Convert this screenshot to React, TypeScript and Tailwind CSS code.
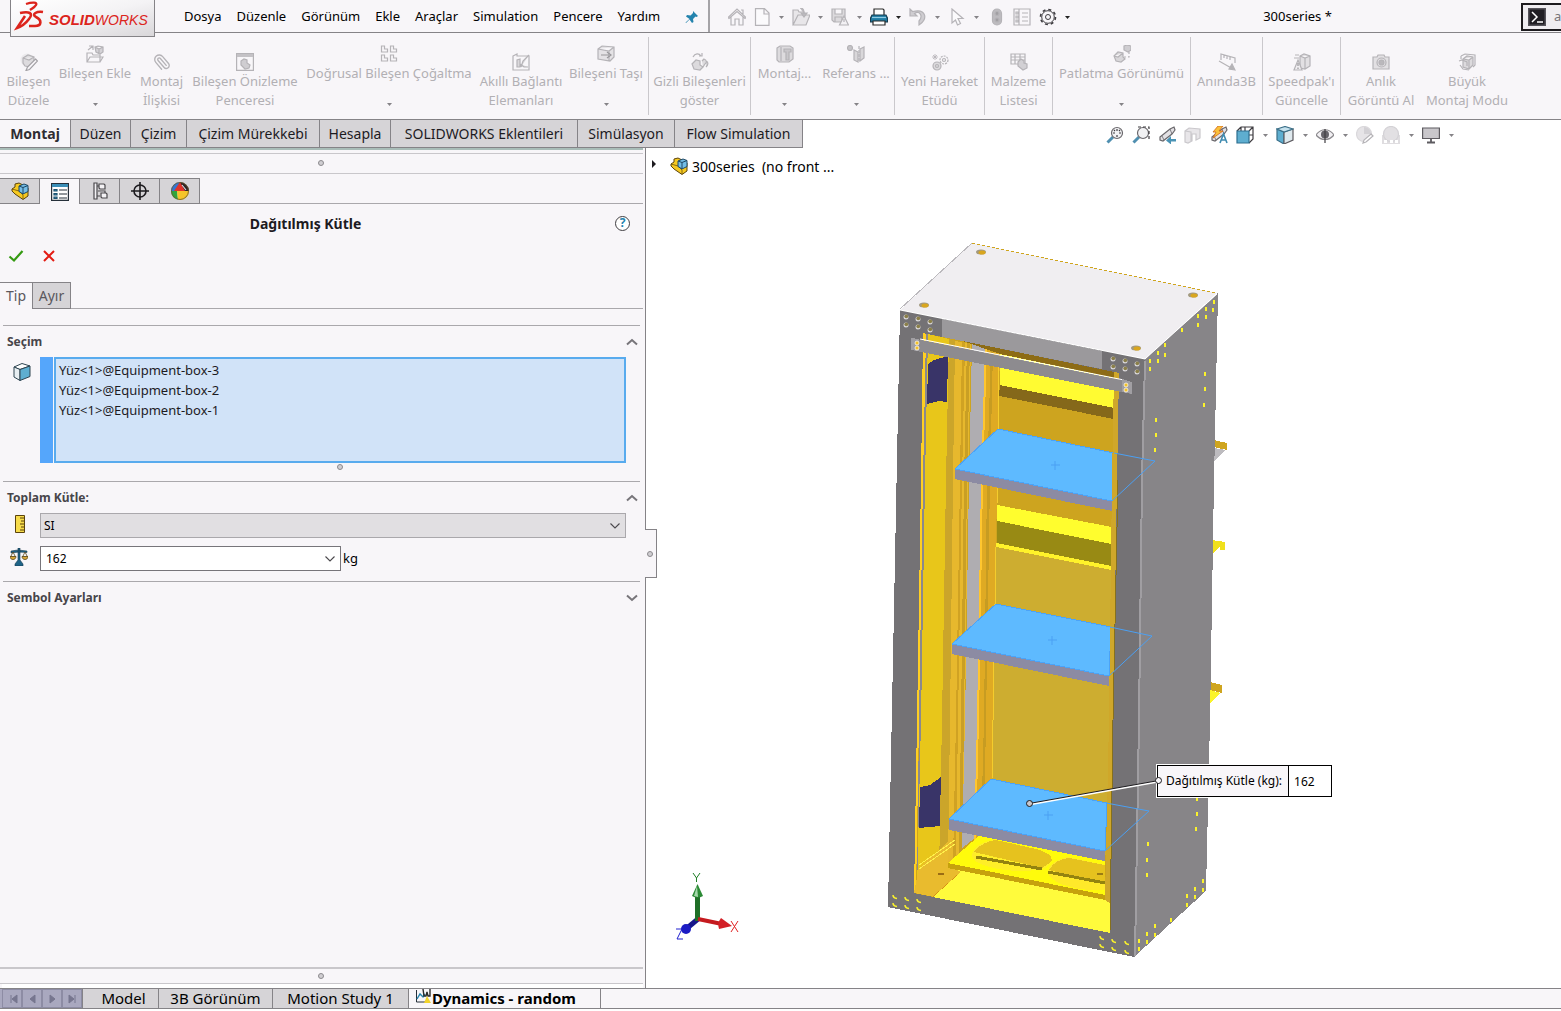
import React from 'react';
import { Paperclip } from 'lucide-react';

/* --- Small shared glyphs --- */
const Caret: React.FC<{ dark?: boolean }> = ({ dark }) => (
  <svg viewBox="0 0 5 3" className="w-[5px] h-[3px]">
    <path d="M0 0h5L2.5 3z" fill={dark ? '#222' : '#858387'} />
  </svg>
);

const Dot: React.FC = () => (
  <span className="block size-[6px] rounded-full border border-[#8b898d] bg-[#d0ced2]" />
);

const Chevron: React.FC<{ up?: boolean }> = ({ up }) => (
  <svg viewBox="0 0 12 8" className="w-3 h-2" fill="none" stroke="#77757a" strokeWidth="2">
    <path d={up ? 'M1 6.5 6 2l5 4.500' : 'M1 1.500 6 6l5-4.500'} />
  </svg>
);

const ThinChevron: React.FC = () => (
  <svg viewBox="0 0 10 6" className="w-[10px] h-[6px]" fill="none" stroke="#4a484c" strokeWidth="1.1">
    <path d="M.5.5 5 5 9.500.5" />
  </svg>
);

const Icon: React.FC<{ children: React.ReactNode; size?: string }> = ({ children, size = 'size-[18px]' }) => (
  <svg viewBox="0 0 18 18" className={`${size} shrink-0`} fill="none" stroke="#b5b3b7" strokeWidth="1.2">
    {children}
  </svg>
);

const PartIcon: React.FC = () => (
  <svg viewBox="0 0 18 18" className="size-[18px] shrink-0" stroke="#5b430c" strokeLinejoin="round">
    <path d="M1 7 4 5V2l4-1 4 2 5 3v8l-5 3.500L4 12 1 9z" fill="#f6c920" />
    <path d="M1 7l7 2 4 4v4" fill="none" strokeWidth=".7" />
    <path d="M8 4l5-2 4 1.500v6L12 12 8 9.500z" fill="#74bde6" stroke="#1d4764" />
    <path d="M8 4l4 1.500 5-2M12 5.500V12" fill="none" stroke="#1d4764" />
  </svg>
);

/* --- Ribbon --- */
const cube = 'M5 6l4-3 6 1v8l-4 4-6-2zM5 6l6 1 4-3M11 7v9';
const grayIcons: Record<string, React.ReactNode> = {
  edit: (
    <>
      <circle cx="7" cy="7" r="6.500" fill="#eceaed" stroke="none" />
      <path d="M3 5l5-3 6 2v7l-3 3-6-1-2-3zM3 5l6 2 5-3" fill="#dddbde" />
      <path d="M15.500 6l2 2-8 8.500L6 17.500 7.500 14z" fill="#f8f6f9" stroke="#a3a1a5" />
    </>
  ),
  insert: (
    <>
      <path d="M1 17V8h5l1 2h7v7zM1 17l3-5h13l-3 5M2 5l5-4M3 1h4v4" />
      <path d="M9 2l3-1 5 1v5l-3 2-4-2zM9 2l4 2 4-2M13 4v4" fill="#d4d2d6" />
    </>
  ),
  clip: <Paperclip x={0} y={0} width={18} height={18} stroke="#b5b3b7" strokeWidth={1.8} transform="rotate(95 9 9)" />,
  preview: (
    <>
      <path d="M.6.600h16.800v16.800H.600z" />
      <path d="M1 1h16v3H1z" fill="#c4c2c6" stroke="none" />
      <path d="M5 8l3-2 3 1v3l3 2-1 3-4 1-4-4z" fill="#cfcdd1" />
    </>
  ),
  pattern: <path d="M1.500 1h3v3h3v3h-6zM10.500 1h3v3h3v3h-6zM1.500 10h3v3h3v3h-6zM10.500 10h3v3h3v3h-6z" />,
  smart: (
    <>
      <path d="M1 3l4-2v2h12v14H1z" />
      <path d="M5 14V7l3-1v8zM9 14l2-6 6-6M8 11l4 3h4" fill="#dbd9dc" />
    </>
  ),
  move: (
    <>
      <path d="M1 4l4-3 12 1v10l-4 4-12-2zM1 4l11 2 5-4M12 6v10" fill="#e4e2e5" />
      <path d="M4 10h8M10 7l4 3-4 3" stroke="#98969a" />
    </>
  ),
  hidden: (
    <>
      <path d="M2 4c2-4 6-4 8-1M8 3h3V0" />
      <path d="M1 11l4-4 4 1v4l3 2-3 3-6-1zM11 8l2-2c3 1 3 4 1 5l-2 3M15 8c3 1 2 4 0 6" fill="#dcdadd" />
    </>
  ),
  assembly: (
    <>
      <path d="M1 3l3-2h10l3 2v11l-4 3H3l-2-2z" fill="#dddbde" />
      <path d="M5 2v14" />
      <path d="M8 7V4h7v3h-2v8h-3V7z" fill="#c9c7cb" />
    </>
  ),
  reference: (
    <>
      <circle cx="3" cy="3" r="2.500" fill="#c6c4c8" />
      <path d="M7 5l4 2v10l-4-2zM13 4l4-2v11l-4 3z" fill="#d9d7da" />
      <path d="M12 1v16" strokeDasharray="3 1" />
    </>
  ),
  motion: (
    <>
      <circle cx="6" cy="13" r="4" fill="#dcdadd" />
      <circle cx="6" cy="13" r="1.500" />
      <circle cx="13" cy="7" r="4" strokeDasharray="2 1" />
      <circle cx="13" cy="7" r="1.500" />
      <path d="M4 1v6M1 4h6M2 2l4 4M6 2L2 6" strokeWidth=".8" />
    </>
  ),
  bom: (
    <>
      <path d="M1 1h14v10H1zM1 4h14M1 7h14M5 1v10M10 1v10" />
      <path d="M8 9l3-3 3 2v2l3 1v4l-4 2-5-4z" fill="#d2d0d4" />
    </>
  ),
  explode: (
    <>
      <path d="M1 11l4-4 5 1v4l2 2-4 3-5-1zM1 11l4 1 5-4" fill="#d9d7da" />
      <path d="M11 1l3-1 4 1v4l-3 2-4-2z" fill="#cfcdd1" />
      <path d="M16 7v5h-5" strokeDasharray="2 2" />
    </>
  ),
  instant: (
    <>
      <path d="M3 7V1l14 4v5M6 2v3M9 3v3M12 4v3" />
      <path d="M1 8l14 8M17 17l-6-1 3-5z" fill="#b5b3b7" />
    </>
  ),
  speedpak: (
    <>
      <path d="M7 3l4-2 6 2v10l-5 3-5-1zM7 3l5 2 5-2M12 5v11M2 2h4M1 5h5" fill="#e2e0e3" />
      <path d="M5 7l4 10H1z" fill="#f1eff2" />
      <path d="M5 10v3M5 14.500v1.500" stroke="#98969a" />
    </>
  ),
  camera: (
    <>
      <path d="M1 4h4l1-2h6l1 2h4v12H1z" fill="#e2e0e3" />
      <circle cx="9.500" cy="9.500" r="4.500" />
      <circle cx="9.500" cy="9.500" r="2.500" fill="#bab8bc" />
    </>
  ),
  large: (
    <>
      <path d={cube} fill="#dcdadd" />
      <path d="M3 3l4-2 10 1v10l-2 2M3 3v3M1 8l3-1 5 2v4M2 12l3 4 6 1" />
    </>
  ),
};

type RibbonItem = { icon: string; lines: string[]; width: string; menu?: boolean; sep?: boolean };

const ribbon: RibbonItem[] = [
  { icon: 'edit', lines: ['Bileşen', 'Düzele'], width: 'w-[57px]' },
  { icon: 'insert', lines: ['Bileşen Ekle'], width: 'w-[76px]', menu: true },
  { icon: 'clip', lines: ['Montaj', 'İlişkisi'], width: 'w-[57px]' },
  { icon: 'preview', lines: ['Bileşen Önizleme', 'Penceresi'], width: 'w-[110px]' },
  { icon: 'pattern', lines: ['Doğrusal Bileşen Çoğaltma'], width: 'w-[178px]', menu: true },
  { icon: 'smart', lines: ['Akıllı Bağlantı', 'Elemanları'], width: 'w-[86px]' },
  { icon: 'move', lines: ['Bileşeni Taşı'], width: 'w-[85px]', menu: true, sep: true },
  { icon: 'hidden', lines: ['Gizli Bileşenleri', 'göster'], width: 'w-[102px]', sep: true },
  { icon: 'assembly', lines: ['Montaj...'], width: 'w-[67px]', menu: true },
  { icon: 'reference', lines: ['Referans ...'], width: 'w-[77px]', menu: true, sep: true },
  { icon: 'motion', lines: ['Yeni Hareket', 'Etüdü'], width: 'w-[90px]', sep: true },
  { icon: 'bom', lines: ['Malzeme', 'Listesi'], width: 'w-[68px]', sep: true },
  { icon: 'explode', lines: ['Patlatma Görünümü'], width: 'w-[138px]', menu: true, sep: true },
  { icon: 'instant', lines: ['Anında3B'], width: 'w-[72px]', sep: true },
  { icon: 'speedpak', lines: ["Speedpak'ı", 'Güncelle'], width: 'w-[78px]', sep: true },
  { icon: 'camera', lines: ['Anlık', 'Görüntü Al'], width: 'w-[80px]' },
  { icon: 'large', lines: ['Büyük', 'Montaj Modu'], width: 'w-[92px]' },
];

const Ribbon: React.FC = () => (
  <div className="flex h-[87px] border-b border-[#858387] bg-[#f8f6f9]">
    {ribbon.map((item) => (
      <div key={item.icon} className={`${item.width} flex shrink-0 justify-center pt-1 pb-1`}>
        <button
          className={`flex flex-1 flex-col items-center whitespace-nowrap text-[13px] leading-[19px] text-[#b2b0b4] ${item.menu ? 'pt-2' : 'pt-4'}`}
        >
          <Icon>{grayIcons[item.icon]}</Icon>
          <span className="mt-px flex flex-col items-center">
            {item.lines.map((line) => <span key={line}>{line}</span>)}
          </span>
          {item.menu && <span className="mt-5"><Caret /></span>}
        </button>
        {item.sep && <span className="w-px bg-[#cac8cc]" />}
      </div>
    ))}
  </div>
);

/* --- Title bar --- */
const menus = ['Dosya', 'Düzenle', 'Görünüm', 'Ekle', 'Araçlar', 'Simulation', 'Pencere', 'Yardım'];

const quick: { name: string; icon: React.ReactNode; width: string; menu?: boolean; dark?: boolean }[] = [
  { name: 'Ana sayfa', width: 'w-[28px]', icon: <path d="M0 9.500 9 1l9 8.500-1 1-8-7-8 7zM3 9v8h4v-6h4v6h4V9M13 2h2v4" /> },
  { name: 'Yeni', width: 'w-[21px]', menu: true, icon: <path d="M2.500.6h9L16 5v12.400H2.500zM11 1v5h5" fill="#fbfafc" /> },
  {
    name: 'Aç', width: 'w-[21px]', menu: true,
    icon: <><path d="M1 17V2h5l1 2h5v3M1 17l5-10h12l-4 10z" fill="#e8e6e9" /><path d="M8 0c4 0 4 3 4 6M9 5l3 4 3-4z" fill="#bcbabe" /></>,
  },
  {
    name: 'Kaydet', width: 'w-[21px]', menu: true,
    icon: <><path d="M1 1h13v13H3l-2-2zM4 1v5h7V1M4 14V9h7v5" fill="#dcdadd" /><path d="M13 8l4.500 9h-9zM13 11v3" fill="#f3f1f4" /></>,
  },
  {
    name: 'Yazdır', width: 'w-[21px]', menu: true, dark: true,
    icon: (
      <>
        <path d="M4 8V1h9l1 1v6" fill="#fff" stroke="#2b2b2b" />
        <path d="M2 7h14l1.500 3v4H.5v-4z" fill="#1f7ca3" stroke="#173b4e" />
        <path d="M2 9.500h14" stroke="#8ecbe3" />
        <path d="M3 13h12v4H3z" fill="#fff" stroke="#2b2b2b" />
      </>
    ),
  },
  { name: 'Geri al', width: 'w-[21px]', menu: true, icon: <path d="M1 1v7h7L5.500 5.500c5-3 9 2 4.500 7.500v4c9-5 8-17-6.500-13.500z" fill="#cfcdd1" /> },
  { name: 'Seç', width: 'w-[21px]', menu: true, icon: <path d="M4 1v14l3.500-3 2 5 3-1.500-2.500-5h5z" fill="#fbfafc" /> },
  {
    name: 'Yeniden oluştur', width: 'w-[24px]',
    icon: <><rect x="4.500" y="1" width="9" height="16" rx="4.500" fill="#bdbbbf" /><circle cx="9" cy="5.500" r="2" fill="#a19fa3" /><circle cx="9" cy="12" r="2" fill="#a19fa3" /></>,
  },
  { name: 'Özellikler', width: 'w-[26px]', icon: <path d="M1 1h16v16H1zM6 1v16M3 4h2v2H3zM3 8h2v2H3zM3 12h2v2H3zM9 5h6M9 9h6M9 13h6" /> },
  {
    name: 'Seçenekler', width: 'w-[26px]',
    icon: (
      <>
        <circle cx="9" cy="9" r="7.500" stroke="#3f3d41" strokeWidth="1.600" strokeDasharray="3 2.900" />
        <circle cx="9" cy="9" r="6.300" stroke="#3f3d41" strokeWidth="1" fill="#f8f6f9" />
        <circle cx="9" cy="9" r="2.500" stroke="#3f3d41" strokeWidth="1" />
      </>
    ),
  },
];

const TitleBar: React.FC = () => (
  <header className="relative flex h-[33px] items-center border-b border-[#858387] bg-[#f8f6f9] pt-[2px] text-[13px]">
    <a
      href="#home"
      aria-label="SOLIDWORKS"
      className="absolute left-[10px] top-0 z-10 h-[37px] w-[145px] border border-t-0 border-[#858387] bg-linear-to-br from-white via-[#f4f3f5] to-[#d9d7da]"
    >
      <svg viewBox="0 0 143 36" className="h-full w-full">
        <g fill="none" stroke="#dc241c" strokeWidth="2.300">
          <path d="M15 4c6-2 12-2 10 1-1 2-3 3-6 5" />
          <path d="M9 13c9-2 14 0 9 6-3 4-6 7-12 9l8-12" strokeWidth="2.600" />
          <path d="M32 12c-6-1-12 2-7 5 6 3 6 9-1 9h-6" strokeWidth="2.600" />
        </g>
        <text x="38" y="25" fill="#dc241c" fontFamily="Liberation Sans" fontStyle="italic" fontSize="15">
          <tspan fontWeight="bold">SOLID</tspan>
          <tspan fontSize="14">WORKS</tspan>
        </text>
      </svg>
    </a>
    <nav className="flex items-center gap-[15px] pl-[184px]">
      {menus.map((m) => <button key={m}>{m}</button>)}
    </nav>
    <button aria-label="Sabitle" className="ml-[25px]">
      <svg viewBox="0 0 14 14" className="size-[14px]" fill="#2483ad">
        <path d="M8 1l5 5-1.500 1-1-.5L8 9l.5 3L7 13 4.500 9.500 1 13l-.5-.5L4.500 9 1 6.500l1-1.500 3.500.5L8 3z" />
      </svg>
    </button>
    <div className="-mt-[2px] ml-[9px] flex h-[32px] items-center border-l-2 border-[#a5a3a7] pt-[2px] pl-[13px]">
      {quick.map((q) => (
        <React.Fragment key={q.name}>
          <button aria-label={q.name} className={`${q.width} flex justify-center`}>
            <Icon>{q.icon}</Icon>
          </button>
          {q.menu && (
            <button aria-label={`${q.name} menüsü`} className="flex w-[18px] justify-center">
              <Caret dark={q.dark} />
            </button>
          )}
        </React.Fragment>
      ))}
      <button aria-label="Seçenekler menüsü" className="flex w-3 justify-center"><Caret dark /></button>
    </div>
    <span className="mr-auto ml-[190px] whitespace-nowrap">300series *</span>
    <div className="flex h-[28px] w-[40px] items-center gap-2 overflow-hidden border-2 border-r-0 border-[#1d1b1f] bg-[#efedf1] pl-[5px] text-[#77757a]">
      <svg viewBox="0 0 18 18" className="size-[18px] shrink-0">
        <path d="M0 0h18v18H0z" fill="#55535a" />
        <path d="M1.500 1.500h15v15h-15z" fill="#201e24" />
        <path d="M4 4l5 5-5 5M9 14h6" fill="none" stroke="#fff" strokeWidth="1.500" />
      </svg>
      <span>a</span>
    </div>
  </header>
);

/* --- Command tabs and view toolbar --- */
const commandTabs = [
  ['Düzen', 'w-[60px]'],
  ['Çizim', 'w-[56px]'],
  ['Çizim Mürekkebi', 'w-[133px]'],
  ['Hesapla', 'w-[71px]'],
  ['SOLIDWORKS Eklentileri', 'w-[187px]'],
  ['Simülasyon', 'w-[97px]'],
  ['Flow Simulation', 'w-[128px]'],
];

const lens = (
  <>
    <path d="M1.500 16.500 7 11" stroke="#4f8fb0" strokeWidth="3" />
    <circle cx="11" cy="7" r="5.500" fill="#f2f2f4" stroke="#6a686c" />
  </>
);
const scope = (
  <>
    <path d="M2 11 12 3l4-2 1 3-3 4-9 7-3-1z" fill="#e3e1e4" stroke="#6a686c" />
    <path d="M12 3l2 5M4 10l2 4" stroke="#6a686c" strokeWidth=".8" />
  </>
);
const views: { name: string; icon: React.ReactNode; menu?: boolean }[] = [
  { name: 'Tümünü sığdır', icon: <>{lens}<path d="M11 3v2M11 9v2M7 7h2M13 7h2M9 5l-1-1M13 5l1-1" stroke="#3f3d41" /></> },
  { name: 'Alana yakınlaştır', icon: <>{lens}<path d="M6 1h11v12" stroke="#3f3d41" strokeDasharray="3 2" /></> },
  { name: 'Önceki görünüm', icon: <>{scope}<path d="M18 13h-5v-3l-5 4.500 5 4v-3h5z" fill="#4a93b5" stroke="none" /></> },
  { name: 'Kesit', icon: <path d="M1 5l4-3 11 1v9l-4 2V8H8v7l-4 2-3-1zM1 5l6 1v9" fill="#e8e6e9" stroke="#cac8cc" /> },
  {
    name: 'Dinamik not',
    icon: (
      <>
        {scope}
        <path d="M8 0h5L9 5h4L3 12l3-6H3z" fill="#f9c13b" stroke="#d0641c" strokeWidth=".8" />
        <path d="M10 17l3.500-9 3.500 9M11 14h5" stroke="#3f8bb0" strokeWidth="1.600" />
      </>
    ),
  },
  {
    name: 'Görünüm yönü', menu: true,
    icon: <><path d="M5 1h12v12l-4 4M5 1 1 5M17 1l-4 4M9 1v10M5 1v4M17 9h-4" stroke="#3f3d41" /><path d="M1 5h12v12H1z" fill="#5eaed0" stroke="#2d6f90" /></>,
  },
  {
    name: 'Görüntü stili', menu: true,
    icon: <><path d="M1 3l7 3v12l-7-4z" fill="#5eaed0" stroke="#3b6f88" /><path d="M8 6l9-3v11l-9 4z" fill="#dfe9ee" stroke="#5d5b60" /><path d="M1 3l8-2.500L17 3 8 6z" fill="#c6e2ee" stroke="#3b6f88" /></>,
  },
  {
    name: 'Gizle/göster', menu: true,
    icon: <><path d="M0 9c5-7 13-7 18 0-5 6-13 6-18 0z" fill="#f2f0f3" stroke="#8b898d" /><circle cx="9" cy="8.500" r="4" fill="#66646a" stroke="none" /><path d="M9 3v14" stroke="#3f3d41" /></>,
  },
  { name: 'Görünüş düzenle', icon: <><circle cx="8" cy="8" r="7.500" fill="#e6e4e7" stroke="#dad8db" /><path d="M8 1a7 7 0 0 1 7 7H8z" fill="#d3d1d5" stroke="none" /><path d="M15 8l2 2-7 6-3 1 1-3z" fill="#fff" /></> },
  { name: 'Sahne uygula', menu: true, icon: <><path d="M0 9h18v9H0z" fill="#dfdde0" stroke="none" /><circle cx="9" cy="8" r="7.500" fill="#e2e0e3" stroke="#d3d1d5" /><path d="M2 14h3v3H2zM8 14h3v3H8zM13 14h3v3h-3z" fill="#fff" stroke="none" /></> },
  { name: 'Görünüm ayarları', menu: true, icon: <><path d="M.600 2h16.800v10.500H.600z" fill="#c9c7cb" stroke="#5d5b60" /><path d="M9 13v3M5 16.500h8" stroke="#5d5b60" strokeWidth="1.800" /></> },
];

const TabRow: React.FC = () => (
  <div className="flex h-[28px] bg-white text-sm">
    <div className="flex items-stretch whitespace-nowrap border-b border-[#858387] text-[#1d1b1f]">
      <button className="w-[70px] bg-[#f8f6f9] font-bold text-[#2f2d31]">Montaj</button>
      {commandTabs.map(([label, width]) => (
        <button key={label} className={`${width} border-l border-[#858387] bg-[#d6d4d7]`}>{label}</button>
      ))}
      <span className="w-px bg-[#858387]" />
    </div>
    <div className="mr-[103px] ml-auto flex items-center pt-[2px]">
      {views.map((v) => (
        <React.Fragment key={v.name}>
          <button aria-label={v.name} className="flex w-[26px] justify-center"><Icon>{v.icon}</Icon></button>
          {v.menu && (
            <button aria-label={`${v.name} menüsü`} className="flex w-[14px] justify-center"><Caret /></button>
          )}
        </React.Fragment>
      ))}
    </div>
  </div>
);

/* --- Property panel --- */
const panelTabs: { name: string; active?: boolean; icon: React.ReactNode }[] = [
  { name: 'FeatureManager', icon: <PartIcon /> },
  {
    name: 'PropertyManager', active: true,
    icon: (
      <Icon>
        <path d="M.600.600h16.800v16.800H.600z" fill="#fff" stroke="#26303a" />
        <path d="M1 1h16v3H1z" fill="#3b8fb8" stroke="none" />
        <path d="M3 6.500h3v1.500H3zM3 10.500h3v1.500H3zM3 14h3v1.500H3z" fill="#3b8fb8" stroke="#1d5270" />
        <path d="M8 7h8M8 11h8M8 15h8" stroke="#26303a" />
      </Icon>
    ),
  },
  {
    name: 'ConfigurationManager',
    icon: (
      <Icon>
        <path d="M3 1h3v16H3zM6 4h3M6 14h3" fill="#f3f1f4" stroke="#4a484c" />
        <path d="M8 2h5l1 1v4H9L8 6zM10 11h5l1 1v4h-5l-1-1zM7 9h7v2" fill="#f3f1f4" stroke="#4a484c" />
      </Icon>
    ),
  },
  {
    name: 'DimXpertManager',
    icon: <Icon><circle cx="9" cy="9" r="6" stroke="#1d1b1f" strokeWidth="1.600" /><path d="M9 0v18M0 9h18" stroke="#1d1b1f" strokeWidth="1.600" /></Icon>,
  },
  {
    name: 'DisplayManager',
    icon: (
      <Icon>
        <path d="M9 9V0a9 9 0 0 0-9 9z" fill="#3576d2" stroke="none" />
        <path d="M9 9V0a9 9 0 0 1 9 9z" fill="#2b2226" stroke="none" />
        <path d="M3 9 9 0l5 9z" fill="#e0332b" stroke="none" />
        <path d="M0 9h6l1 8.500A9 9 0 0 1 0 9z" fill="#2fa53c" stroke="none" />
        <path d="M6 9h12a9 9 0 0 1-11 8.800z" fill="#f5c52a" stroke="none" />
        <path d="M11 3l4 5" stroke="#ddd" />
        <circle cx="9" cy="9" r="8.500" stroke="#6b5a2a" strokeWidth=".8" />
      </Icon>
    ),
  },
];

const selection = ['Yüz<1>@Equipment-box-3', 'Yüz<1>@Equipment-box-2', 'Yüz<1>@Equipment-box-1'];

const GroupHead: React.FC<{ title: string; open?: boolean }> = ({ title, open }) => (
  <button className="flex h-[31px] w-full items-center justify-between pt-px pr-[2px] pl-1 text-left text-[12px] font-bold text-[#47454a]">
    {title}
    <Chevron up={open} />
  </button>
);

const PropertyPanel: React.FC = () => (
  <aside className="relative flex w-[646px] shrink-0 flex-col border-r border-[#858387] bg-[#f8f6f9]">
    <div className="mr-[2px] flex h-[26px] flex-col border-b border-[#c9c7cb]">
      <div className="h-[6px] border-t-2 border-b border-t-[#a9bdb8] border-b-[#c9c7cb]" />
      <div className="flex flex-1 items-center justify-center pr-[2px] pb-px"><Dot /></div>
    </div>

    <div className="mt-1 mr-[2px] flex h-[26px]">
      {panelTabs.map((t) => (
        <button
          key={t.name}
          aria-label={t.name}
          className={`flex w-10 items-center justify-center border-t border-r border-[#858387] ${t.active ? '' : 'border-b bg-[#d6d4d7]'}`}
        >
          {t.icon}
        </button>
      ))}
      <span className="flex-1 border-b border-[#aaa8ac]" />
    </div>

    <div className="flex h-[38px] items-center pr-[15px]">
      <h2 className="flex-1 pt-px pr-[4px] text-center text-sm font-bold text-[#1d1b1f]">Dağıtılmış Kütle</h2>
      <button aria-label="Yardım" className="flex size-[15px] items-center justify-center rounded-full border border-[#3f3d41] bg-white text-[12px] leading-none font-bold text-[#2483ad]">
        ?
      </button>
    </div>

    <div className="flex h-[40px] items-center gap-[19px] pb-[12px] pl-2">
      <button aria-label="Tamam">
        <svg viewBox="0 0 16 14" className="h-[14px] w-4"><path d="M1.500 7.500 6 11.500 14.500 2" fill="none" stroke="#359a12" strokeWidth="2.200" /></svg>
      </button>
      <button aria-label="İptal">
        <svg viewBox="0 0 12 12" className="size-3"><path d="M1 1l10 10M11 1 1 11" fill="none" stroke="#e31b13" strokeWidth="2" /></svg>
      </button>
    </div>

    <div className="mr-[2px] flex h-[27px] text-sm text-[#5a585d]">
      <button className="w-8 border-t border-[#858387]">Tip</button>
      <button className="w-[39px] border border-[#858387] bg-[#d6d4d7]">Ayır</button>
      <span className="flex-1 border-b border-[#aaa8ac]" />
    </div>

    <section className="mt-4 mr-[5px] ml-[3px] border-t border-[#aaa8ac]">
      <GroupHead title="Seçim" open />
      <div className="flex">
        <div className="flex w-[37px] justify-center pt-[5px]">
          <svg viewBox="0 0 18 20" className="h-5 w-[18px]" stroke="#2e4451" strokeLinejoin="round">
            <path d="M1 5l8-3.500L17 4 7 7.500z" fill="#fff" />
            <path d="M1 5l6 2.500v11L1 15z" fill="#e8eef2" />
            <path d="M7 7.500 17 4v10.500l-10 4z" fill="#5eaed0" />
          </svg>
        </div>
        <div className="mr-px h-[106px] w-[13px] bg-[#55a6fb]" />
        <ul className="mr-[14px] h-[106px] flex-1 border-2 border-[#58abee] bg-[#d1e3f8] pt-px pl-[3px] text-[13px] leading-5 text-[#1d1b1f]">
          {selection.map((s) => <li key={s}>{s}</li>)}
        </ul>
      </div>
      <div className="flex h-[18px] justify-center pt-px pl-[37px]"><Dot /></div>
    </section>

    <section className="mr-[5px] ml-[3px] border-t border-[#aaa8ac]">
      <GroupHead title="Toplam Kütle:" open />
      <div className="flex h-[25px] items-center">
        <label htmlFor="unit" aria-label="Birim" className="flex w-[37px] justify-center pr-1">
          <svg viewBox="0 0 10 18" className="mb-1 h-[18px] w-[10px]">
            <path d="M.5.5h9v17h-9z" fill="#f7dc4b" stroke="#5b430c" />
            <path d="M5 3h4M6 6h3M5 9h4M6 12h3M5 15h4" stroke="#5b430c" />
          </svg>
        </label>
        <div className="relative mr-[14px] flex flex-1 items-center">
          <select id="unit" className="h-[25px] w-full appearance-none border border-[#aaa8ac] bg-[#e1dfe2] px-[3px] text-[12px]">
            <option>SI</option>
          </select>
          <span className="pointer-events-none absolute right-[6px]"><ThinChevron /></span>
        </div>
      </div>
      <div className="mt-2 flex h-[25px] items-center">
        <label htmlFor="mass" aria-label="Kütle" className="flex w-[37px] justify-center pr-[6px]">
          <svg viewBox="0 0 18 18" className="mb-1 size-[18px]">
            <path d="M8 0h2v12l3 4v2H5v-2l3-4zM1 3l7-1 9 1v1.500L9 4 1 5z" fill="#1f6387" stroke="#173b4e" strokeWidth=".6" />
            <path d="M3 4 .5 9h5zM15 4l-2.500 5h5z" fill="none" stroke="#59471c" strokeWidth=".8" />
            <path d="M0 8.500h6c0 4-6 4-6 0zM12 8.500h6c0 4-6 4-6 0z" fill="#d9a637" stroke="#59471c" strokeWidth=".8" />
          </svg>
        </label>
        <div className="flex h-[25px] w-[301px] items-center border border-[#77757a] bg-white">
          <input id="mass" defaultValue="162" className="min-w-0 flex-1 pl-[5px] text-[12px] outline-none" />
          <button aria-label="Değer listesi" className="pr-[5px]"><ThinChevron /></button>
        </div>
        <span className="pl-[2px] text-[13px]">kg</span>
      </div>
    </section>

    <section className="mt-[10px] mr-[5px] ml-[3px] border-t border-[#aaa8ac]">
      <GroupHead title="Sembol Ayarları" />
    </section>

    <div className="mt-auto mr-[2px] flex h-[17px] items-center justify-center border-t-2 border-b border-[#c9c7cb] pr-[2px]"><Dot /></div>
    <div className="mx-[2px] h-[4px] shrink-0 bg-white" />

    <button
      aria-label="Paneli daralt"
      className="absolute top-[381px] -right-[12px] z-10 flex h-[49px] w-[12px] items-center justify-center border border-l-0 border-[#858387] bg-[#f8f6f9] pr-px"
    >
      <Dot />
    </button>
  </aside>
);

/* --- Model view --- */
const poly = (points: string, fill: string) => <polygon points={points} fill={fill} />;

const shelves = [
  { top: '998,429 1114,453 1112,501 955,469', side: '955,469 1112,501 1112,511 955,479', tip: 'M1114 453 1155 461 1112 501', cx: 1055, cy: 465 },
  { top: '996,604 1111,627 1109,676 952,644', side: '952,644 1109,676 1109,686 952,654', tip: 'M1110 627 1152 636 1109 676', cx: 1052, cy: 640 },
  { top: '991,779 1107,803 1105,851 949,819', side: '949,819 1105,851 1105,861 949,830', tip: 'M1106 803 1149 811 1105 851', cx: 1048, cy: 815 },
];

const frontHoles = [
  [906, 317], [906, 325], [918, 319], [918, 327], [930, 322], [930, 330],
  [1113, 359], [1113, 367], [1125, 361], [1125, 369], [1137, 364], [1137, 372],
];

const footHoles = [
  [895, 897], [895, 905], [907, 899], [907, 907], [919, 901], [919, 909],
  [1102, 938], [1102, 946], [1114, 941], [1114, 949], [1127, 943], [1127, 952],
];

const sideHoles = [
  [1214, 302], [1213, 310], [1206, 309], [1206, 317], [1198, 316], [1198, 325], [1182, 330],
  [1165, 345], [1165, 355], [1158, 353], [1158, 361], [1150, 361], [1150, 369],
  [1205, 374], [1205, 389], [1204, 405], [1156, 420], [1156, 435], [1155, 450],
  [1197, 799], [1197, 814], [1196, 829], [1148, 844], [1147, 860], [1147, 875],
  [1203, 881], [1203, 890], [1195, 889], [1195, 897], [1187, 896], [1187, 905], [1171, 920],
  [1155, 926], [1155, 935], [1147, 934], [1147, 942], [1139, 941], [1139, 949],
];

const Cabinet: React.FC = () => (
  <svg viewBox="880 235 360 730" className="absolute top-[87px] left-[234px] h-[730px] w-[360px]" shapeRendering="crispEdges">
    {/* rear brackets */}
    {poly('1214,440 1227,443 1227,450 1214,447', '#cfa51f')}
    {poly('1214,448 1226,450 1214,461', '#bdbbbf')}
    {poly('1212,540 1225,542 1225,550 1220,550 1220,547 1212,554', '#f0e01c')}
    {poly('1210,682 1222,685 1222,693 1210,690', '#cfa51f')}
    {poly('1210,690 1221,693 1210,703', '#fbf42a')}

    {/* shell */}
    {poly('972,243 1217,293 1145,359 900,310', '#f0eef1')}
    {poly('1145,359 1218,293 1214,480 1210,720 1206,891 1134,957', '#878588')}
    {poly('900,310 1145,359 1142,480 1139,720 1134,957 888,907', '#747275')}
    {poly('942,319 1102,351 1102,369 942,337', '#9b999c')}
    <path d="M900 310 1145 359 1217 294" fill="none" stroke="#fff" strokeWidth="1" shapeRendering="geometricPrecision" />
    <path d="M900 309 972 243" stroke="#bbb9bd" />
    <path d="M972 243 1217 293" stroke="#cfa51f" strokeDasharray="3 2" />
    <path d="M1145 361 1142 480 1139 720 1135 956" fill="none" stroke="#a09ea2" strokeWidth="2" />

    {/* opening */}
    {poly('923,333 1119,373 1117,480 1113,720 1110,933 914,893 917,720 921,480', '#cda41f')}
    {poly('923,333 926,334 923,480 919,720 916,893 914,893 917,720 921,480', '#ffcf22')}
    {poly('926,334 928,334 925,480 921,720 919,890 917,890 919,720 923,480', '#8b898d')}
    {poly('928,334 949,339 946,480 942,720 939,880 917,892 921,720 925,480', '#e8c61a')}
    {poly('928,364 934,360 948,356 947,402 939,401 927,404', '#393468')}
    {poly('920,787 930,785 937,780 941,776 940,826 919,828', '#393468')}
    {poly('949,339 955,341 953,480 950,720 948,866 939,872 942,720 946,480', '#cba52a')}
    {poly('955,341 971,344 968,480 965,720 962,856 948,866 950,720 953,480', '#e7b82d')}
    {poly('962,342 965,343 962,480 958,720 956,860 953,862 956,720 960,480', '#d0a223')}
    {poly('967,343 970,344 967,480 964,720 962,854 959,856 961,720 964,480', '#c99f25')}
    {poly('972,344 985,347 981,480 977,720 975,838 962,848 965,720 969,480', '#afadb1')}
    {poly('985,347 1000,350 997,480 994,720 991,840 974,846 977,720 981,480', '#dfaa23')}
    {poly('985,347 987,347 983,480 979,720 976,838 974,840 977,720 981,480', '#ffc62f')}
    {poly('991,349 993,349 990,480 986,720 984,830 981,832 984,720 987,480', '#c79c22')}

    {/* back panel */}
    {poly('1000,545 1112,570 1110,720 1105,870 990,850 993,720 996,545', '#cdad30')}
    {poly('1000,350 1114,376 1114,408 1000,385', '#fffb32')}
    {poly('963,341 1119,373 1114,378 1000,354', '#8d6c16')}
    {poly('1000,385 1114,408 1114,419 999,396', '#85681a')}
    {poly('997,505 1112,527 1112,544 997,521', '#fffd2e')}
    {poly('997,521 1112,544 1111,566 997,543', '#988a14')}
    {poly('996,543 1111,566 1111,570 996,547', '#fff22a')}
    <path d="M999 366 997 505M996 547 992 779" stroke="#f5cc2c" />

    {/* floor and tray */}
    {poly('919,868 948,842 948,866 962,872 935,897 914,893', '#e9bb2e')}
    <path d="M919 865 955 840M919 869 955 844" stroke="#fff04a" />
    <path d="M933 897 960 873" stroke="#d98e16" />
    {poly('948,866 1105,898 1110,900 1110,933 933,897 961,872', '#fffb3c')}
    {poly('948,863 980,835 1105,860 1105,898', '#fffb0c')}
    <path d="M972 856c0-10 12-15 24-16l40 9c16 4 20 16 6 20-30 6-70-3-70-13z" fill="#ffee28" />
    <path d="M974 852c6-8 14-11 22-12l40 9c12 3 18 8 15 13l-9 6z" fill="#e6c21e" />
    <path d="M1048 872c0-8 10-13 20-15l37 8v25c-30 2-57-8-57-18z" fill="#ffe92a" />
    <path d="M1049 870c4-8 12-11 20-12l36 7v19z" fill="#e6c21e" />
    <path d="M976 857 1042 869M1048 872 1105 883" stroke="#94830f" strokeWidth="3" />
    {poly('948,863 1105,895 1105,900 948,868', '#c6a20d')}
    <ellipse cx="941" cy="874" rx="3" ry="1.500" fill="#9b6c14" />
    <ellipse cx="1100" cy="874" rx="3" ry="1.500" fill="#9b7c14" />

    {/* shelves */}
    {shelves.map((s) => (
      <g key={s.cy}>
        {poly(s.side, '#8c8ba3')}
        <polygon points={s.top} fill="#5ebaff" stroke="#4ba3f7" strokeWidth="1" />
      </g>
    ))}
    {poly('1114,372 1119,373 1117,480 1113,720 1110,903 1105,900 1109,720 1112,480', '#cfa72a')}
    <path d="M1118 480 1113 720 1110 930" fill="none" stroke="#86701c" />
    {shelves.map((s) => (
      <path
        key={s.cy}
        d={`${s.tip}M${s.cx - 4} ${s.cy}h9M${s.cx} ${s.cy - 4}v9`}
        fill="none"
        stroke="#4ba0f3"
        shapeRendering="geometricPrecision"
      />
    ))}

    {/* crossbar */}
    {poly('911,338 1132,382 1132,394 911,350', '#8d8b8f')}
    <path d="M920 339 1124 380" stroke="#fff" shapeRendering="geometricPrecision" />
    {poly('911,338 919,339 919,351 911,350', '#a19fa3')}
    {poly('1122,379 1132,382 1132,394 1122,392', '#a19fa3')}

    <g shapeRendering="geometricPrecision">
      {[[917, 343], [917, 348], [1126, 385], [1126, 390]].map(([x, y]) => (
        <circle key={`${x}-${y}`} cx={x} cy={y} r="2" fill="#f2c12a" stroke="#fff" strokeWidth=".7" />
      ))}
      {frontHoles.map(([x, y]) => (
        <g key={`${x}-${y}`}>
          <circle cx={x} cy={y} r="2.500" fill="#d9d7da" />
          <circle cx={x + 0.3} cy={y - 0.7} r="1.900" fill="#8a7f4a" />
        </g>
      ))}
      {footHoles.map(([x, y]) => (
        <path key={`${x}-${y}`} d={`M${x - 2} ${y - 2}q0 3 4 3.500`} fill="none" stroke="#fbf32a" strokeWidth="1.500" />
      ))}
      {[[981, 252], [924, 305], [1193, 295], [1136, 348]].map(([x, y]) => (
        <g key={x}>
          <ellipse cx={x} cy={y} rx="5" ry="2.500" fill="#a39a80" />
          <ellipse cx={x + 1} cy={y + 0.5} rx="3.500" ry="2" fill="#d9a61f" />
        </g>
      ))}
    </g>
    {sideHoles.map(([x, y]) => (
      <path key={`${x}-${y}`} d={`M${x - 1} ${y - 2}h2v4h-2z`} fill="#fbf32a" />
    ))}
  </svg>
);

const Triad: React.FC = () => (
  <svg viewBox="670 870 75 75" className="absolute top-[722px] left-[24px] size-[75px]">
    <path d="M698 919 686 929" stroke="#17178a" strokeWidth="5" />
    <path d="M697.500 921V894" stroke="#1f6f27" strokeWidth="5" />
    <path d="M698 919 722 924" stroke="#c51a1f" strokeWidth="4" />
    <path d="M697.500 884 703 896q-5.500 3-11 0z" fill="#2b8a35" />
    <path d="M697 886 698 897l-4-1z" fill="#a5d8aa" />
    <path d="M732 926 719 929q-2-6 2-11z" fill="#d32027" />
    <circle cx="686" cy="929" r="5" fill="#1c1cc4" />
    <g fill="none">
      <path d="M693 873l3.500 5 3.500-5M696.500 878v4" stroke="#1f7f27" />
      <path d="M731 921l7 11M738 921l-7 11" stroke="#e02020" />
      <path d="M676 929h6l-5 10h6" stroke="#2020d0" />
    </g>
  </svg>
);

const ModelView: React.FC = () => (
  <main className="relative min-w-0 flex-1 overflow-hidden bg-white">
    <div className="flex items-center pt-[6px] pl-[6px] text-sm">
      <button aria-label="Genişlet" className="mb-1 w-[18px]">
        <svg viewBox="0 0 4 8" className="h-2 w-1"><path d="M0 0v8l4-4z" fill="#1d1b1f" /></svg>
      </button>
      <PartIcon />
      <span className="ml-1 pt-[3px] whitespace-pre">300series  (no front ...</span>
    </div>
    <Cabinet />
    <Triad />
    <div className="absolute top-[617px] left-[511px] flex h-8 items-center border border-black bg-[#f8f6f9] text-[12px] outline outline-white">
      <label htmlFor="callout" className="pr-[6px] pl-2 whitespace-nowrap">Dağıtılmış Kütle (kg):</label>
      <input id="callout" defaultValue="162" className="h-full w-[43px] border-l border-black bg-white pl-[5px] outline-none" />
    </div>
    <svg viewBox="1024 774 142 36" className="pointer-events-none absolute top-[626px] left-[378px] h-[36px] w-[142px]" fill="none">
      <path d="M1032 804 1156 782" stroke="#fff" strokeWidth="2" />
      <path d="M1032 803 1156 781" stroke="#1d1b1f" />
      <circle cx="1029.500" cy="803.500" r="3" fill="#c9c7cb" stroke="#1d1b1f" />
      <circle cx="1158.500" cy="780.500" r="3" fill="#f8f6f9" stroke="#1d1b1f" />
    </svg>
  </main>
);

/* --- Bottom tabs --- */
const BottomBar: React.FC = () => (
  <footer className="shrink-0 bg-white pb-[2px] text-[15px]">
    <div className="flex h-[21px] border-y border-[#858387] bg-[#f8f6f9] leading-[19px] whitespace-nowrap">
      <div className="flex w-[83px] border-r border-[#858387] bg-[#a9a8bf] pl-[2px]">
        {['M5 2v8M11 2v8L6 6z', 'M9 2v8L4 6z', 'M4 2v8l5-4z', 'M3 2v8l5-4zM9 2v8'].map((d) => (
          <button key={d} aria-label="Sekme gezinme" className="flex flex-1 items-center justify-center border border-[#8d8ca4]">
            <svg viewBox="0 0 13 12" className="h-3 w-[13px]" fill="#77768f" stroke="#77768f" strokeWidth="1"><path d={d} /></svg>
          </button>
        ))}
      </div>
      <button className="w-[76px] border-r border-[#858387] bg-[#d6d4d7] pl-[6px]">Model</button>
      <button className="w-[114px] border-r border-[#858387] bg-[#d6d4d7]">3B Görünüm</button>
      <button className="w-[136px] border-r border-[#858387] bg-[#d6d4d7]">Motion Study 1</button>
      <button className="flex w-[192px] items-center border-r border-[#858387] pl-[6px] font-bold">
        <svg viewBox="0 0 17 16" className="mb-1 h-4 w-[17px] shrink-0" fill="none">
          <path d="M1.500 1v12h10" stroke="#26303a" />
          <path d="M2 10l3-5 3 3 2-3" stroke="#2483ad" strokeWidth="1.400" />
          <path d="M8 0l1 7h2l1-4 1 4h2V0" stroke="#2b2b2b" strokeWidth="1.400" />
          <path d="M12 7l4 7H9z" fill="#f2d32a" />
        </svg>
        Dynamics - random
      </button>
    </div>
  </footer>
);

const App: React.FC = () => {
  return (
    <div className="flex h-screen flex-col overflow-hidden bg-white font-['Noto_Sans','Open_Sans',sans-serif] text-black">
      <TitleBar />
      <Ribbon />
      <TabRow />
      <div className="flex min-h-0 flex-1">
        <PropertyPanel />
        <ModelView />
      </div>
      <BottomBar />
    </div>
  );
};

export default App;
